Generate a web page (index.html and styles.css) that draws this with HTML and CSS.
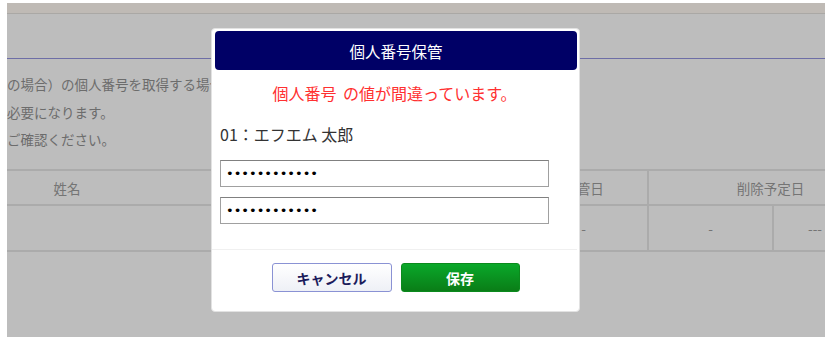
FILE: index.html
```html
<!DOCTYPE html>
<html lang="ja">
<head>
<meta charset="utf-8">
<title>個人番号保管</title>
<link rel="stylesheet" href="styles.css">
</head>
<body>
<div class="page">
  <div class="topband"></div>
  <div class="titlebar"></div>
  <div class="intro">
    <p>の場合）の個人番号を取得する場合は、事業者の個人番号が</p>
    <p>必要になります。</p>
    <p>ご確認ください。</p>
  </div>
  <table class="list">
    <colgroup>
      <col class="c1"><col class="c2"><col class="c3"><col class="c4"><col class="c5"><col class="c6">
    </colgroup>
    <thead>
      <tr><th>姓名</th><th>区分</th><th>番号</th><th>保管日</th><th colspan="2">削除予定日</th></tr>
    </thead>
    <tbody>
      <tr><td></td><td></td><td></td><td>-</td><td>-</td><td class="dash">---</td></tr>
    </tbody>
  </table>
</div>

<div class="modal">
  <div class="modal-head">個人番号保管</div>
  <div class="modal-body">
    <p class="error">個人番号 の値が間違っています。</p>
    <p class="name">01：エフエム 太郎</p>
    <input class="field" type="password" value="123456789012">
    <input class="field second" type="password" value="123456789012">
  </div>
  <div class="modal-foot">
    <button class="btn cancel" type="button">キャンセル</button>
    <button class="btn save" type="button">保存</button>
  </div>
</div>
</body>
</html>
```
FILE: styles.css
```css
html, body {
  margin: 0;
  padding: 0;
  background: #ffffff;
  font-family: "Noto Sans CJK JP", "Noto Sans", sans-serif;
}

.page {
  margin: 3px 4px 0 7px;
  height: 334px;
  background: #bdbdbd;
  overflow: hidden;
}

.topband {
  height: 10px;
  background: #bfbab5;
  border-bottom: 1px solid #aaa8a5;
}

.titlebar {
  height: 44px;
  border-bottom: 1px solid #6e6ea6;
}

.intro {
  padding-top: 12px;
  height: 110px;
  width: 204px;
  overflow: hidden;
  box-sizing: border-box;
}

.intro p {
  margin: 0;
  font-size: 13.5px;
  line-height: 27.5px;
  color: #6c6c6c;
  white-space: nowrap;
}

.list {
  border-collapse: collapse;
  table-layout: fixed;
  width: 885px;
  font-size: 13.5px;
  color: #747474;
}

.list .c1 { width: 120px; }
.list .c2 { width: 200px; }
.list .c3 { width: 193px; }
.list .c4 { width: 128px; }
.list .c5 { width: 125px; }
.list .c6 { width: 119px; }

.list th,
.list td {
  border-top: 2px solid #ababab;
  border-bottom: 2px solid #ababab;
  text-align: center;
  font-weight: normal;
  padding: 0;
}

.list th {
  height: 33px;
}

.list td {
  height: 44px;
}

.list th:nth-child(5),
.list td:nth-child(5),
.list td:nth-child(6) {
  border-left: 2px solid #ababab;
}

.list td.dash {
  text-align: left;
  padding-left: 34px;
}

.modal {
  position: absolute;
  left: 211px;
  top: 28px;
  width: 369px;
  height: 284px;
  box-sizing: border-box;
  background: #ffffff;
  border: 1px solid #e2e2e2;
  border-radius: 4px;
  display: flex;
  flex-direction: column;
}

.modal-head {
  margin: 2px 2px 0 3px;
  height: 39px;
  background: #000066;
  border-radius: 4px;
  color: #ffffff;
  font-size: 15.5px;
  display: flex;
  align-items: center;
  justify-content: center;
}

.modal-body {
  padding: 0 0 25px 8px;
  border-bottom: 1px solid #f0f0f0;
  margin-right: 2px;
  display: flex;
  flex-direction: column;
}

.error {
  margin: 11px 0 0 -8px;
  text-align: center;
  color: #ff3030;
  font-size: 16px;
  word-spacing: 3px;
  line-height: 24px;
}

.name {
  margin: 17px 0 0;
  color: #333333;
  font-size: 16px;
  line-height: 24px;
}

.field {
  margin: 14px 0 0;
  width: 329px;
  height: 27px;
  box-sizing: border-box;
  border: 1px solid #a0a0a0;
  border-top-color: #808080;
  padding: 0 5px;
  font-family: "DejaVu Sans", sans-serif;
  font-size: 13px;
  color: #000000;
  background: #ffffff;
  outline: none;
}

.field.second {
  margin-top: 10px;
}

.modal-foot {
  padding-top: 13px;
  display: flex;
  justify-content: center;
  gap: 9px;
}

.btn {
  height: 29px;
  border-radius: 3px;
  font-family: "Noto Sans CJK JP", "Noto Sans", sans-serif;
  font-size: 14px;
  font-weight: bold;
  padding: 0;
  cursor: pointer;
}

.cancel {
  width: 120px;
  background: linear-gradient(#ffffff, #eef0f6);
  border: 1px solid #8a92d4;
  color: #1c1c5c;
}

.save {
  width: 119px;
  background: linear-gradient(#0aa82a, #0a7d17);
  border: 1px solid #0b8a1d;
  color: #ffffff;
}
```
